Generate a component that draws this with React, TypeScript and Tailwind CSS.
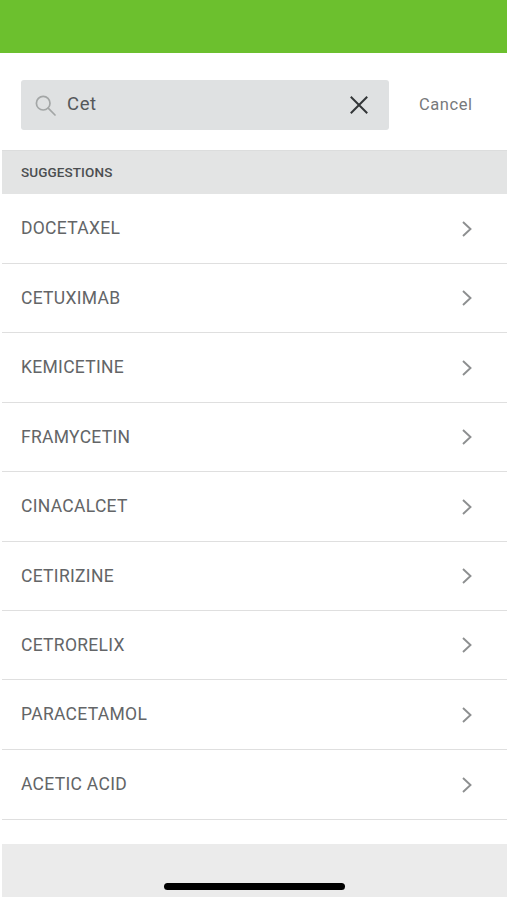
const drugs = [
  { name: 'DOCETAXEL', height: 'h-[70px]' },
  { name: 'CETUXIMAB', height: 'h-[69px]' },
  { name: 'KEMICETINE', height: 'h-[70px]' },
  { name: 'FRAMYCETIN', height: 'h-[69px]' },
  { name: 'CINACALCET', height: 'h-[70px]' },
  { name: 'CETIRIZINE', height: 'h-[69px]' },
  { name: 'CETRORELIX', height: 'h-[69px]' },
  { name: 'PARACETAMOL', height: 'h-[70px]' },
  { name: 'ACETIC ACID', height: 'h-[70px]' },
];

const App = () => {
  return (
    <div className="flex h-[900px] w-[507px] flex-col overflow-hidden bg-white font-['Roboto',sans-serif]">
      <div className="h-[53px] shrink-0 bg-[#6cc02e]" />

      {/* Search */}
      <div className="flex h-[97px] shrink-0 items-start pl-[21px] pt-[27px]">
        <div className="flex h-[50px] w-[368px] items-center rounded-[3px] bg-[#dfe1e2] pl-[14px]">
          <svg width="21" height="21" viewBox="0 0 21 21" fill="none" stroke="#a3a6a6" strokeWidth="1.7" strokeLinecap="round">
            <circle cx="8.2" cy="8.2" r="6.8" />
            <path d="M13.2 13.2 L20 20" />
          </svg>
          <span className="ml-[11px] -mt-[2px] text-[18.5px] leading-none tracking-[0.6px] text-[#55585a]">Cet</span>
          <svg className="ml-auto mr-[21px]" width="18" height="18" viewBox="0 0 18 18" fill="none" stroke="#333638" strokeWidth="2" strokeLinecap="square">
            <path d="M1.5 1.5 L16.5 16.5 M16.5 1.5 L1.5 16.5" />
          </svg>
        </div>
        <span className="ml-[30px] mt-[15px] text-[16.5px] leading-5 tracking-[0.55px] text-[#77797b]">Cancel</span>
      </div>

      {/* Suggestions */}
      <div className="ml-[2px] flex h-[44px] shrink-0 items-center border-t border-[#dcdddd] bg-[#e3e4e4] pl-[19px]">
        <span className="text-[13.5px] font-medium tracking-[0.1px] text-[#4b4e50]">SUGGESTIONS</span>
      </div>

      <ul>
        {drugs.map((drug) => (
          <li key={drug.name} className={`ml-[2px] flex ${drug.height} items-center justify-between border-b border-[#dfdfdf] pl-[19px] pr-[35px]`}>
            <span className="text-[17.5px] tracking-[0.3px] text-[#636567]">{drug.name}</span>
            <svg width="10" height="16" viewBox="0 0 10 16" fill="none" stroke="#8d8f90" strokeWidth="1.9">
              <path d="M1 1 L8.5 8 L1 15" />
            </svg>
          </li>
        ))}
      </ul>

      {/* Home indicator */}
      <div className="ml-[2px] mt-[24px] flex h-[53px] shrink-0 items-end justify-center bg-[#ebebeb] pb-[7px]">
        <div className="h-[7px] w-[181px] rounded-full bg-black" />
      </div>
      <div className="flex-1 bg-white" />
    </div>
  );
};

export default App;
